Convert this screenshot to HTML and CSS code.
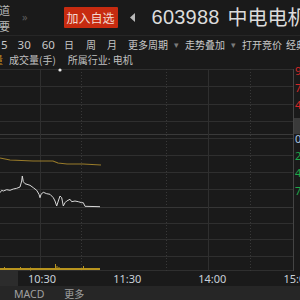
FILE: index.html
```html
<!DOCTYPE html>
<html>
<head>
<meta charset="utf-8">
<link rel="stylesheet" href="styles.css">
</head>
<body>
<div class="app">
  <header class="top">
    <div class="side"><span>道</span><span>要</span></div>
    <span class="chev">»</span>
    <span class="add">加入自选</span>
    <svg class="tri" width="5" height="9" viewBox="0 0 5 9"><path d="M5 0 L0 4.5 L5 9 Z" fill="#b8b8b8"/></svg>
    <span class="code">603988</span>
    <span class="name">中电电机</span>
  </header>
  <nav class="tools">
    <span class="num t5">5</span>
    <span class="num t30">30</span>
    <span class="num t60">60</span>
    <span class="cj tri1">日</span>
    <span class="cj tri2">周</span>
    <span class="cj tri3">月</span>
    <span class="cj more">更多周期</span>
    <span class="drop">▾</span>
    <span class="cj over">走势叠加</span>
    <span class="drop">▾</span>
    <span class="cj open">打开竞价</span>
    <span class="cj classic">经典</span>
  </nav>
  <div class="info">
    <span class="vol-mark">量</span>
    <span class="vol">成交量(手)</span>
    <span class="ind">所属行业: 电机</span>
  </div>
  <div class="chart">
    <svg width="300" height="204" viewBox="0 0 300 204">
      <g stroke="#2f2f2f" stroke-width="1" shape-rendering="crispEdges">
        <line x1="0" y1="2.5" x2="293" y2="2.5"/>
        <line x1="0" y1="19.5" x2="293" y2="19.5"/>
        <line x1="0" y1="37.5" x2="293" y2="37.5"/>
        <line x1="0" y1="54.5" x2="293" y2="54.5"/>
        <line x1="0" y1="67.5" x2="293" y2="67.5" stroke="#3a3a3a"/>
        <line x1="0" y1="71.5" x2="293" y2="71.5"/>
        <line x1="0" y1="88.5" x2="293" y2="88.5"/>
        <line x1="0" y1="105.5" x2="293" y2="105.5"/>
        <line x1="0" y1="122.5" x2="293" y2="122.5"/>
        <line x1="0" y1="140.5" x2="293" y2="140.5" stroke="#363636"/>
        <line x1="0" y1="156.5" x2="293" y2="156.5"/>
        <line x1="0" y1="172.5" x2="293" y2="172.5"/>
        <line x1="0" y1="189.5" x2="293" y2="189.5"/>
        <line x1="0" y1="203.5" x2="293" y2="203.5"/>
        <line x1="40.5" y1="2" x2="40.5" y2="204"/>
        <line x1="208.5" y1="2" x2="208.5" y2="204"/>
        <line x1="293.5" y1="2" x2="293.5" y2="204" stroke="#444"/>
      </g>
      <g stroke="#383838" stroke-width="1" stroke-dasharray="1 2" shape-rendering="crispEdges">
        <line x1="81.5" y1="2" x2="81.5" y2="204"/>
        <line x1="166.5" y1="2" x2="166.5" y2="204"/>
        <line x1="250.5" y1="2" x2="250.5" y2="204"/>
      </g>
      <rect x="294" y="51" width="6" height="16" fill="#3a3a3a"/>
      <circle cx="60" cy="3" r="1.6" fill="#e8e8e8"/>
      <polyline fill="none" stroke="#9a7c2a" stroke-width="1.2" points="0,91 10,93 33,94 53,94 58,96 67,97 83,97 101,98"/>
      <polyline fill="none" stroke="#d8d8d8" stroke-width="1" points="0,125.7 1.7,123.3 3.3,124 6.7,122.7 10,123.3 13.3,122 16.7,121.3 20,120 21.7,114 22.3,109 23.3,114.7 25,116.7 30,118.3 33.3,120.7 36.7,123.3 39,127.3 40,130.7 41,127.3 43.3,125.3 46.7,126.7 50,127.3 53.3,130.7 55,134 56.7,139 58.3,134 60,129 61.7,130.7 63.3,139 65,135.7 66.7,134 70,132.3 71.7,134.7 75,134 78.3,134.7 81.7,135.7 83.3,135.7 85,139.3 100,139.7"/>
      <g fill="#b8941e">
        <rect x="0" y="201" width="100" height="2"/>
        <rect x="4" y="200" width="1" height="3"/>
        <rect x="20" y="200" width="1" height="3"/>
        <rect x="30" y="200.5" width="1" height="3"/>
        <rect x="55" y="197" width="1" height="6"/>
        <rect x="56.5" y="199" width="1" height="4"/>
        <rect x="58.5" y="200" width="1" height="3"/>
        <rect x="83" y="199" width="1" height="4"/>
      </g>
      <g font-family="Noto Sans, sans-serif" font-size="11">
        <text x="295" y="8" fill="#d42828">9</text>
        <text x="295" y="25" fill="#d42828">7</text>
        <text x="295" y="42" fill="#d42828">4</text>
        <text x="295" y="76" fill="#a8c4e0">0</text>
        <text x="295" y="93" fill="#1fa84a">2</text>
        <text x="295" y="110" fill="#1fa84a">4</text>
        <text x="295" y="128" fill="#1fa84a">7</text>
      </g>
    </svg>
  </div>
  <div class="times">
    <span class="tcell"></span>
    <span class="t t1">10:30</span>
    <span class="t t2">11:30</span>
    <span class="t t3">14:00</span>
    <span class="t t4">15:00</span>
  </div>
  <div class="tabs">
    <span class="tab macd">MACD</span>
    <span class="tab more2">更多</span>
  </div>
</div>
</body>
</html>
```
FILE: styles.css
```css
html, body {
  margin: 0;
  padding: 0;
  background: #1a1a1a;
}
.app {
  width: 300px;
  height: 300px;
  overflow: hidden;
  background: #1a1a1a;
  font-family: "Noto Sans", "Noto Sans CJK SC", sans-serif;
  color: #c8c8c8;
}
.top, .tools, .info, .times, .tabs {
  overflow: hidden;
}
.top > *, .tools > *, .info > *, .times > *, .tabs > * {
  flex-shrink: 0;
}
.top {
  height: 35px;
  display: flex;
  align-items: center;
  border-bottom: 1px solid #262626;
  white-space: nowrap;
}
.side {
  width: 10px;
  display: flex;
  flex-direction: column;
  gap: 4px;
  font-size: 11px;
  line-height: 12px;
  font-family: "Noto Sans CJK SC", sans-serif;
  color: #b8b8b8;
  overflow: hidden;
}
.side span {
  margin-left: -1px;
}
.chev {
  margin-left: 12px;
  font-size: 11px;
  color: #5a5a5a;
  margin-top: -2px;
}
.add {
  margin-left: 36px;
  width: 54px;
  height: 21px;
  background: #c72b10;
  color: #f3dcd2;
  font-family: "Noto Sans CJK SC", sans-serif;
  font-size: 12px;
  line-height: 21px;
  text-align: center;
  border-radius: 1px;
  margin-top: -1px;
}
.tri {
  margin-left: 12px;
  margin-top: -1px;
}
.code {
  margin-left: 17px;
  font-family: "Liberation Sans", sans-serif;
  font-size: 20px;
  color: #dcdcdc;
  letter-spacing: 0.2px;
  margin-top: -1px;
}
.name {
  margin-left: 8px;
  font-family: "Noto Sans CJK SC", sans-serif;
  font-size: 20px;
  color: #dcdcdc;
  letter-spacing: 0;
  margin-top: -2px;
}
.tools {
  height: 16px;
  display: flex;
  align-items: center;
  white-space: nowrap;
  color: #c8c8c8;
}
.num {
  font-family: "Noto Sans", sans-serif;
  font-size: 11.5px;
}
.cj {
  font-family: "Noto Sans CJK SC", sans-serif;
  font-size: 10px;
}
.t5 { margin-left: 1px; }
.t30 { margin-left: 10px; }
.t60 { margin-left: 11px; }
.tri1 { margin-left: 9px; }
.tri2 { margin-left: 12px; }
.tri3 { margin-left: 11px; }
.more { margin-left: 11px; }
.drop {
  font-size: 9px;
  color: #7a7a7a;
  margin-left: 6px;
}
.over { margin-left: 6px; }
.open { margin-left: 6px; }
.classic { margin-left: 4px; }
.info {
  height: 15px;
  display: flex;
  align-items: center;
  font-family: "Noto Sans CJK SC", sans-serif;
  font-size: 10px;
  color: #c0c0c0;
  white-space: nowrap;
}
.vol-mark {
  color: #c8941e;
  margin-left: -7px;
  width: 10px;
  overflow: hidden;
}
.vol { margin-left: 6px; }
.ind { margin-left: 12px; }
.chart {
  height: 204px;
}
.chart svg {
  display: block;
}
.times {
  height: 15px;
  display: flex;
  align-items: center;
  font-family: "Noto Sans", sans-serif;
  font-size: 11px;
  color: #c8d0d8;
  white-space: nowrap;
}
.tcell {
  width: 18px;
  height: 15px;
  background: #2c2c2c;
}
.t1 { margin-left: 10px; }
.t2 { margin-left: 57px; }
.t3 { margin-left: 57px; }
.t4 { margin-left: 57px; }
.tabs {
  height: 15px;
  background: #262626;
  display: flex;
  align-items: center;
  font-size: 10.5px;
  color: #a0a0a0;
}
.macd {
  margin-left: 14px;
  font-family: "Noto Sans", sans-serif;
}
.more2 {
  margin-left: 20px;
  font-family: "Noto Sans CJK SC", sans-serif;
  font-size: 10px;
}
```
